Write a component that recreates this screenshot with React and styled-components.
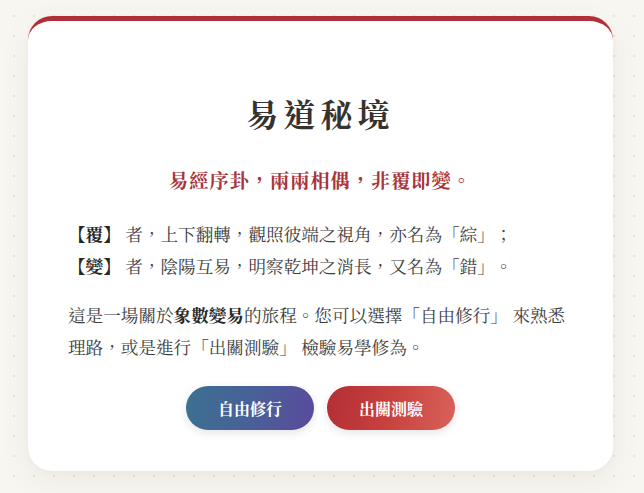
import React from "react";
import styled, { createGlobalStyle } from "styled-components";

const GlobalStyle = createGlobalStyle`
  html, body {
    margin: 0;
    padding: 0;
  }
  body {
    background-color: #f8f6f1;
    background-image: radial-gradient(circle, #e9e3da 1px, transparent 1.2px);
    background-size: 20px 20px;
    background-position: 4px 6px;
    font-family: "Noto Serif CJK TC", "Noto Sans CJK TC", "Noto Sans", sans-serif;
    color: #3b3b3b;
    text-spacing-trim: space-all;
  }
`;

const Page = styled.div`
  min-height: 493px;
  padding: 16px 31px 0 28px;
  box-sizing: border-box;
`;

const Card = styled.section`
  width: 585px;
  box-sizing: border-box;
  background: #fff;
  border-top: 5px solid #b0303a;
  border-radius: 24px;
  padding: 72px 40px 41px;
  box-shadow: 0 10px 30px rgba(120, 100, 80, 0.08), 0 2px 6px rgba(120, 100, 80, 0.04);
`;

const Title = styled.h1`
  margin: 0;
  text-align: center;
  font-size: 32px;
  line-height: 40px;
  font-weight: 700;
  letter-spacing: 5px;
  color: #36322e;
`;

const Subtitle = styled.p`
  margin: 32px 0 0;
  text-align: center;
  font-size: 19.2px;
  line-height: 30px;
  font-weight: 700;
  letter-spacing: 1px;
  color: #a9333a;
`;

const Para = styled.p`
  margin: ${(props) => props.$gap || "17px"} 0 0;
  font-size: 17.6px;
  line-height: 32px;
  color: #3d3d3d;
  strong {
    font-weight: 700;
    color: #262626;
  }
`;

const Actions = styled.div`
  margin-top: 23px;
  display: flex;
  justify-content: center;
  gap: 13px;
`;

const Button = styled.button`
  width: 128px;
  height: 44px;
  border: none;
  border-radius: 22px;
  font-family: inherit;
  font-size: 16px;
  font-weight: 700;
  color: #fff;
  cursor: pointer;
  background: ${(props) =>
    props.$variant === "red"
      ? "linear-gradient(100deg, #b32e34 0%, #c8423f 50%, #d9625a 100%)"
      : "linear-gradient(100deg, #3b7190 0%, #4a5f98 55%, #5a4a9d 100%)"};
  box-shadow: 0 3px 8px rgba(60, 40, 40, 0.12);
`;

export default function App() {
  return (
    <>
      <GlobalStyle />
      <Page>
        <Card>
          <Title>易道秘境</Title>
          <Subtitle>易經序卦，兩兩相偶，非覆即變。</Subtitle>
          <Para $gap="23px">
            <strong>【覆】</strong> 者，上下翻轉，觀照彼端之視角，亦名為「綜」；
            <br />
            <strong>【變】</strong> 者，陰陽互易，明察乾坤之消長，又名為「錯」。
          </Para>
          <Para>
            這是一場關於<strong>象數變易</strong>的旅程。您可以選擇「自由修行」 來熟悉理路，或是進行「出關測驗」 檢驗易學修為。
          </Para>
          <Actions>
            <Button>自由修行</Button>
            <Button $variant="red">出關測驗</Button>
          </Actions>
        </Card>
      </Page>
    </>
  );
}
